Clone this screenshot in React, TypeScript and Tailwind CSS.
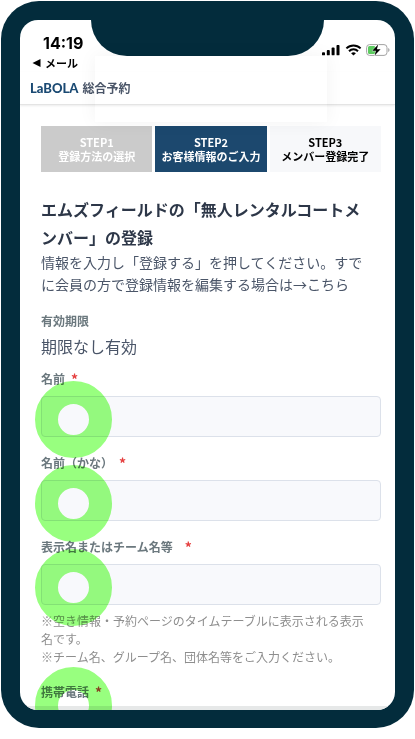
import React, { useState } from "react";

// Green tap marker shown over a field
const TapMarker = ({ className = "" }) => (
  <span
    aria-hidden="true"
    className={`pointer-events-none absolute -left-1.5 size-[77px] rounded-full border-[23px] border-[#98ff7f] mix-blend-multiply ${className}`}
  />
);

const Required = ({ className = "ml-2" }) => (
  <span className={`text-sm leading-[18px] font-bold text-[#e53e3e] ${className}`}>
    *
  </span>
);

const StatusIcons = () => (
  <div className="flex items-center gap-1">
    <svg width="19" height="12" viewBox="0 0 19 12" fill="#000">
      <rect x="0" y="8.2" width="3" height="3.1" rx="0.9" />
      <rect x="4.8" y="6" width="3" height="5.3" rx="0.9" />
      <rect x="9.6" y="3.600" width="3" height="7.700" rx="0.9" />
      <rect x="14.500" y="0.900" width="3" height="10.400" rx="0.9" />
    </svg>
    <svg
      width="17"
      height="12"
      viewBox="0 0 17 12"
      fill="none"
      stroke="#000"
      strokeWidth="2"
    >
      <path d="M1.400 4.400a10.200 10.200 0 0 1 14.200 0" />
      <path d="M4 7.200a6.400 6.400 0 0 1 9 0" />
      <path d="M8.500 11.600 6.100 9.300a3.500 3.500 0 0 1 4.800 0z" fill="#000" stroke="none" />
    </svg>
    <svg width="24" height="12" viewBox="0 0 24 12">
      <rect
        x="0.600"
        y="0.600"
        width="20.400"
        height="10.800"
        rx="3"
        fill="#fff"
        stroke="#a3a3a3"
      />
      <path d="M22.200 4v4c1.800-.7 1.800-3.300 0-4z" fill="#a3a3a3" />
      <rect x="2" y="2" width="7.500" height="8" rx="1.500" fill="#5ccb5f" />
      <path
        d="M12.200.4 6.200 6.800h3.700l-1.300 4.800 6-6.400h-3.700z"
        fill="#000"
        stroke="#fff"
        strokeWidth="0.800"
        paintOrder="stroke"
      />
    </svg>
  </div>
);

const steps = [
  { step: "STEP1", title: "登録方法の選択", style: "bg-[#cbcbcb] text-white" },
  { step: "STEP2", title: "お客様情報のご入力", style: "bg-[#1c486e] text-white" },
  { step: "STEP3", title: "メンバー登録完了", style: "bg-[#f7f8fa] text-black" },
];

const fields = [
  { id: "name", label: "名前", star: "ml-1.5" },
  { id: "kana", label: "名前（かな）", star: "ml-1.5" },
  { id: "displayName", label: "表示名またはチーム名等", star: "ml-3" },
];

const App = () => {
  // States
  const [values, setValues] = useState({ name: "", kana: "", displayName: "" });

  return (
    <div className="bg-white p-px font-['Noto_Sans_CJK_JP',sans-serif]">
      <div className="rounded-[38px] bg-[#032c3c] p-[19px] pb-[18px]">
        <div className="relative overflow-hidden rounded-[18px] bg-white">
          {/* Notch */}
          <div className="absolute inset-x-[71px] top-0 h-9 rounded-b-[36px] bg-[#032c3c]" />
          <div className="pointer-events-none absolute top-9 right-[68px] left-[75px] h-[66px] shadow-[0_0_18px_rgba(0,0,0,0.05)]" />

          {/* Status bar */}
          <div className="flex justify-between pt-3 pr-[5px] pl-3">
            <div>
              <p className="pl-[11px] font-[Inter,sans-serif] text-base leading-[22px] font-bold text-black">
                14:19
              </p>
              <a
                href="#mail"
                className="flex items-center gap-1 text-[11px] leading-[18px] font-bold text-black"
              >
                <svg width="9" height="8" viewBox="0 0 9 8">
                  <path d="M.5 4 8.500 0v8z" fill="#000" />
                </svg>
                メール
              </a>
            </div>
            <div className="pt-3">
              <StatusIcons />
            </div>
          </div>

          {/* Header */}
          <header className="flex items-center gap-1 border-b border-[#e4e4e4] py-1.5 pl-2.5 leading-5 shadow-[0_1px_2px_rgba(0,0,0,0.08)]">
            <a
              href="#top"
              className="font-[Lato,sans-serif] text-[13px] leading-5 font-black text-[#1b4a73]"
            >
              LaBOLA
            </a>
            <span className="text-xs leading-5 font-bold text-[#4a5568]">
              総合予約
            </span>
          </header>

          <main className="pt-[21px] pr-3.5 pl-[21px]">
            {/* Steps */}
            <ol className="grid grid-cols-3 gap-[3px] text-center text-[11px] leading-[14px] font-bold">
              {steps.map(({ step, title, style }) => (
                <li key={step} className={`py-[9px] whitespace-nowrap ${style}`}>
                  {step}
                  <br />
                  {title}
                </li>
              ))}
            </ol>

            <h1 className="mt-[23px] pr-2 text-base leading-7 font-bold text-[#2d3748]">
              エムズフィールドの「無人レンタルコートメンバー」の登録
            </h1>
            <p className="pr-2 text-sm leading-[22px] text-[#4a5568]">
              情報を入力し「登録する」を押してください。すでに会員の方で登録情報を編集する場合は→こちら
            </p>

            <form>
              <p className="mt-[17px] text-xs leading-[18px] font-bold text-[#6b787e]">
                有効期限
              </p>
              <p className="mt-1 text-base leading-6 text-[#4a5568]">
                期限なし有効
              </p>

              <div className="mt-3 space-y-[17px]">
                {fields.map(({ id, label, star }) => (
                  <div key={id}>
                    <label
                      htmlFor={id}
                      className="flex text-xs leading-[18px] font-bold text-[#6b787e]"
                    >
                      {label}
                      <Required className={star} />
                    </label>
                    <div className="relative mt-2">
                      <input
                        id={id}
                        name={id}
                        type="text"
                        value={values[id]}
                        onChange={(e) =>
                          setValues({ ...values, [id]: e.target.value })
                        }
                        className="block h-[41px] w-full rounded border border-[#dce1ea] bg-[#f8f9fc] px-3 text-sm text-[#2d3748]"
                      />
                      <TapMarker className="-top-[15px]" />
                    </div>
                  </div>
                ))}
              </div>

              <p className="mt-[7px] pr-2 text-xs leading-[18px] text-[#8e8e8e]">
                ※空き情報・予約ページのタイムテーブルに表示される表示名です。
                <br />
                ※チーム名、グループ名、団体名等をご入力ください。
              </p>

              {/* Mobile number, cut off by the bottom of the screen */}
              <div className="relative mt-[17px] pb-[5px]">
                <p className="flex text-xs leading-[18px] font-bold text-[#6b787e]">
                  携帯電話
                  <Required className="ml-1.5" />
                </p>
                <TapMarker className="-top-4" />
              </div>
            </form>
          </main>
          <div className="h-1 bg-[#e6e8e8]" />
        </div>
      </div>
    </div>
  );
};

export default App;
